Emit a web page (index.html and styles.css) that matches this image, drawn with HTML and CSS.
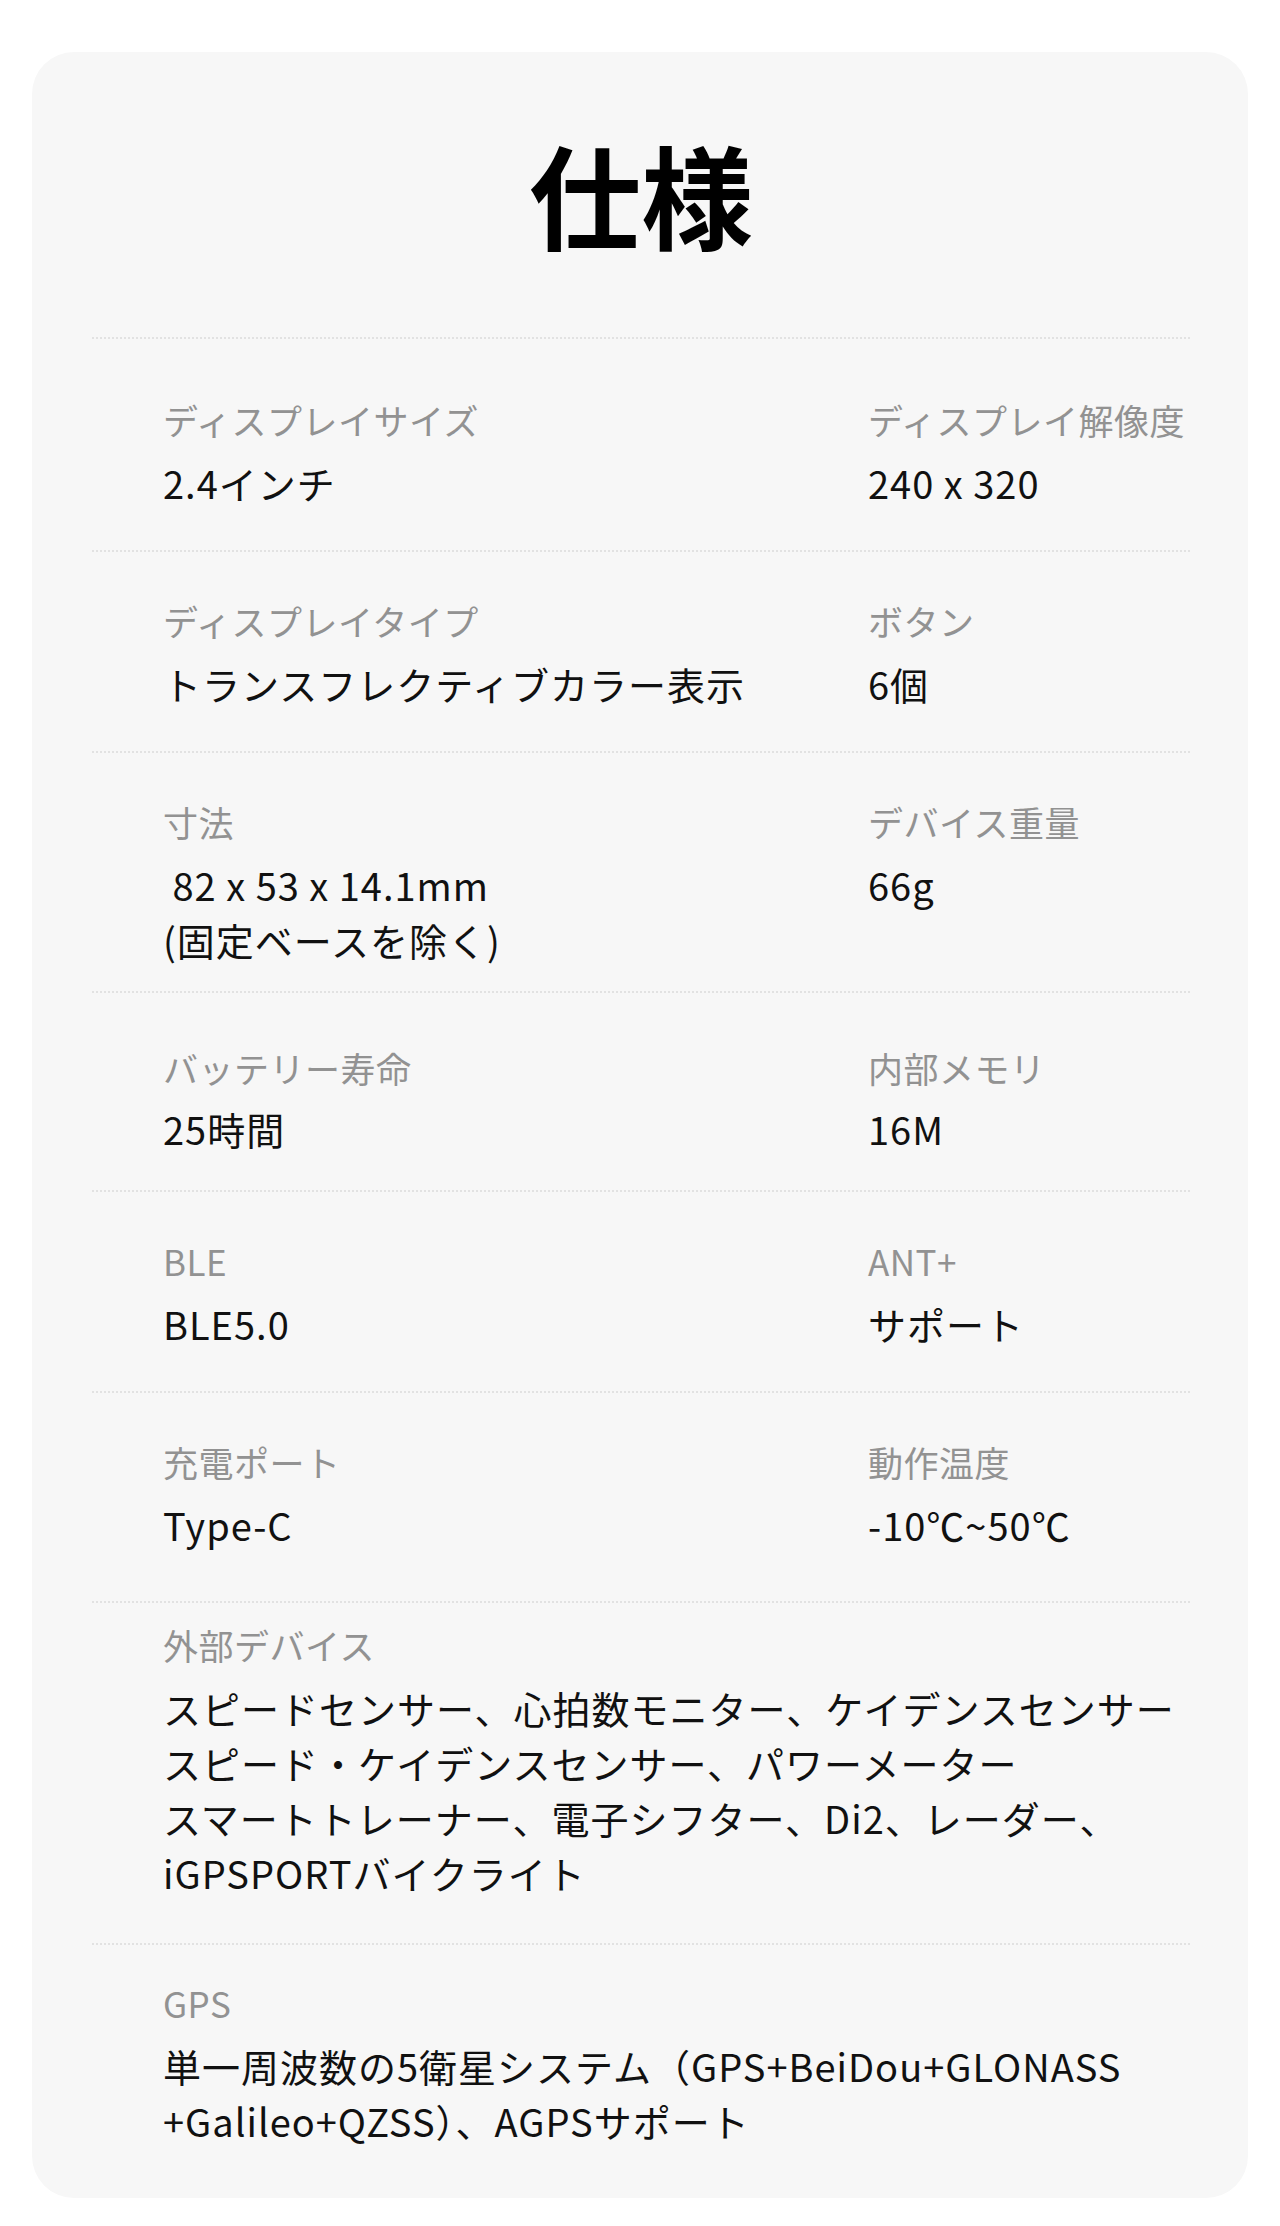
FILE: index.html
```html
<!DOCTYPE html>
<html lang="ja">
<head>
<meta charset="utf-8">
<title>仕様</title>
<link rel="stylesheet" href="styles.css">
</head>
<body>
<main class="card">
  <h1 class="title">仕様</h1>
  <section class="specs">
    <div class="row row-first">
      <div class="item">
        <div class="label">ディスプレイサイズ</div>
        <div class="value">2.4インチ</div>
      </div>
      <div class="item">
        <div class="label">ディスプレイ解像度</div>
        <div class="value">240 x 320</div>
      </div>
    </div>
    <div class="row">
      <div class="item">
        <div class="label">ディスプレイタイプ</div>
        <div class="value">トランスフレクティブカラー表示</div>
      </div>
      <div class="item">
        <div class="label">ボタン</div>
        <div class="value">6個</div>
      </div>
    </div>
    <div class="row row-multi">
      <div class="item">
        <div class="label">寸法</div>
        <div class="value">&nbsp;82 x 53 x 14.1mm<br>(固定ベースを除く)</div>
      </div>
      <div class="item">
        <div class="label">デバイス重量</div>
        <div class="value">66g</div>
      </div>
    </div>
    <div class="row row-battery">
      <div class="item">
        <div class="label">バッテリー寿命</div>
        <div class="value">25時間</div>
      </div>
      <div class="item">
        <div class="label">内部メモリ</div>
        <div class="value">16M</div>
      </div>
    </div>
    <div class="row">
      <div class="item">
        <div class="label">BLE</div>
        <div class="value">BLE5.0</div>
      </div>
      <div class="item">
        <div class="label">ANT+</div>
        <div class="value">サポート</div>
      </div>
    </div>
    <div class="row row-loose">
      <div class="item">
        <div class="label">充電ポート</div>
        <div class="value">Type-C</div>
      </div>
      <div class="item">
        <div class="label">動作温度</div>
        <div class="value">-10℃~50℃</div>
      </div>
    </div>
    <div class="row row-wide row-devices">
      <div class="item">
        <div class="label">外部デバイス</div>
        <div class="value">スピードセンサー、心拍数モニター、ケイデンスセンサー<br>スピード・ケイデンスセンサー、パワーメーター<br>スマートトレーナー、電子シフター、Di2、レーダー、<br>iGPSPORTバイクライト</div>
      </div>
    </div>
    <div class="row row-wide row-last">
      <div class="item">
        <div class="label">GPS</div>
        <div class="value">単一周波数の5衛星システム（GPS+BeiDou+GLONASS<br>+Galileo+QZSS）、AGPSサポート</div>
      </div>
    </div>
  </section>
</main>
</body>
</html>
```

FILE: styles.css
```css
html, body {
  margin: 0;
  padding: 0;
  background: #ffffff;
}

body {
  font-family: "Noto Sans CJK JP", "Noto Sans", sans-serif;
  color: #111111;
}

.card {
  margin: 52px 32px 28px;
  padding: 71px 58px 0 60px;
  background: #f7f7f7;
  border-radius: 42px;
}

.title {
  margin: 0 0 74px;
  font-size: 112px;
  line-height: 140px;
  font-weight: 700;
  text-align: center;
  color: #000000;
}

.row {
  display: grid;
  grid-template-columns: 705px 1fr;
  padding: 47px 0 40px 71px;
  border-top: 2px dotted #e2e2e2;
}

.row-first {
  padding-top: 59px;
}

.row-multi {
  padding-bottom: 24px;
}

.row-battery {
  padding-top: 53px;
  padding-bottom: 34px;
}

.row-battery .label {
  margin-bottom: 11px;
}

.row-loose {
  padding-bottom: 49px;
}

.row-wide {
  grid-template-columns: 1fr;
}

.row-devices {
  padding-top: 20px;
  padding-bottom: 43px;
}

.row-last {
  padding-top: 36px;
  padding-bottom: 50px;
}

.label {
  font-size: 35px;
  line-height: 44px;
  letter-spacing: 0.5px;
  color: #929292;
  white-space: nowrap;
  margin-bottom: 13px;
}

.value {
  font-size: 38px;
  line-height: 55px;
  letter-spacing: 1px;
  color: #111111;
  white-space: nowrap;
}
```
